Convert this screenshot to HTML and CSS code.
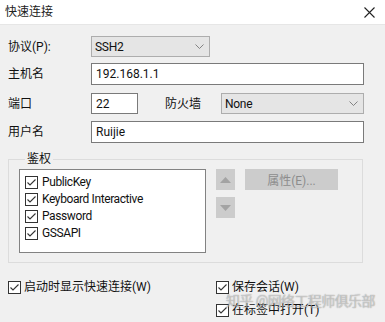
FILE: index.html
```html
<!DOCTYPE html>
<html>
<head>
<meta charset="utf-8">
<link rel="stylesheet" href="styles.css">
</head>
<body>
<div class="win">
  <div class="titlebar">
    <span class="title">快速连接</span>
    <svg class="close" width="11" height="11" viewBox="0 0 11 11"><path d="M0.5 0.5 L10.5 10.5 M10.5 0.5 L0.5 10.5" stroke="#222" stroke-width="1.1" fill="none"/></svg>
  </div>
  <div class="body">
    <div class="row r1">
      <span class="lbl">协议(P):</span>
      <div class="select sel-proto"><span>SSH2</span><svg class="chev" width="9" height="5" viewBox="0 0 9 5"><path d="M0.5 0.5 L4.5 4.5 L8.5 0.5" stroke="#777" stroke-width="0.9" fill="none"/></svg></div>
    </div>
    <div class="row r2">
      <span class="lbl">主机名</span>
      <div class="input wide">192.168.1.1</div>
    </div>
    <div class="row r3">
      <span class="lbl">端口</span>
      <div class="input port">22</div>
      <span class="lbl2">防火墙</span>
      <div class="select sel-fw"><span>None</span><svg class="chev" width="9" height="5" viewBox="0 0 9 5"><path d="M0.5 0.5 L4.5 4.5 L8.5 0.5" stroke="#777" stroke-width="0.9" fill="none"/></svg></div>
    </div>
    <div class="row r4">
      <span class="lbl">用户名</span>
      <div class="input wide">Ruijie</div>
    </div>
    <fieldset class="group">
      <legend>鉴权</legend>
      <div class="grp-inner">
        <div class="list">
          <div class="item"><span class="cb"><svg width="13" height="13" viewBox="0 0 13 13"><rect x="0.5" y="0.5" width="12" height="12" fill="#fff" stroke="#333"/><path d="M2.5 6.5 L5 9 L10.5 3.5" stroke="#333" stroke-width="1.1" fill="none"/></svg></span>PublicKey</div>
          <div class="item"><span class="cb"><svg width="13" height="13" viewBox="0 0 13 13"><rect x="0.5" y="0.5" width="12" height="12" fill="#fff" stroke="#333"/><path d="M2.5 6.5 L5 9 L10.5 3.5" stroke="#333" stroke-width="1.1" fill="none"/></svg></span>Keyboard Interactive</div>
          <div class="item"><span class="cb"><svg width="13" height="13" viewBox="0 0 13 13"><rect x="0.5" y="0.5" width="12" height="12" fill="#fff" stroke="#333"/><path d="M2.5 6.5 L5 9 L10.5 3.5" stroke="#333" stroke-width="1.1" fill="none"/></svg></span>Password</div>
          <div class="item"><span class="cb"><svg width="13" height="13" viewBox="0 0 13 13"><rect x="0.5" y="0.5" width="12" height="12" fill="#fff" stroke="#333"/><path d="M2.5 6.5 L5 9 L10.5 3.5" stroke="#333" stroke-width="1.1" fill="none"/></svg></span>GSSAPI</div>
        </div>
        <div class="arrows">
          <div class="abtn"><svg width="11" height="6" viewBox="0 0 11 6"><path d="M0 6 L5.5 0 L11 6 Z" fill="#a3a3a3"/></svg></div>
          <div class="abtn"><svg width="11" height="6" viewBox="0 0 11 6"><path d="M0 0 L5.5 6 L11 0 Z" fill="#a3a3a3"/></svg></div>
        </div>
        <div class="pbtn">属性(E)...</div>
      </div>
    </fieldset>
    <div class="opts">
      <div class="col">
        <div class="opt"><span class="cb"><svg width="13" height="13" viewBox="0 0 13 13"><rect x="0.5" y="0.5" width="12" height="12" fill="#fff" stroke="#333"/><path d="M2.5 6.5 L5 9 L10.5 3.5" stroke="#333" stroke-width="1.1" fill="none"/></svg></span>启动时显示快速连接(W)</div>
      </div>
      <div class="col right">
        <div class="opt"><span class="cb"><svg width="13" height="13" viewBox="0 0 13 13"><rect x="0.5" y="0.5" width="12" height="12" fill="#fff" stroke="#333"/><path d="M2.5 6.5 L5 9 L10.5 3.5" stroke="#333" stroke-width="1.1" fill="none"/></svg></span>保存会话(W)</div>
        <div class="opt"><span class="cb"><svg width="13" height="13" viewBox="0 0 13 13"><rect x="0.5" y="0.5" width="12" height="12" fill="#fff" stroke="#333"/><path d="M2.5 6.5 L5 9 L10.5 3.5" stroke="#333" stroke-width="1.1" fill="none"/></svg></span>在标签中打开(T)</div>
      </div>
    </div>
    <div class="watermark">知乎 @网络工程师俱乐部</div>
  </div>
</div>
</body>
</html>
```
FILE: styles.css
```css
* { box-sizing: border-box; }
html, body { margin: 0; padding: 0; }
body {
  width: 385px;
  height: 322px;
  overflow: hidden;
  background: #f0f0f0;
  font-family: Roboto, "Noto Sans CJK SC", sans-serif;
  font-size: 12px;
  color: #111;
}
.win { width: 385px; height: 322px; }
.titlebar {
  height: 25px;
  background: #fff;
  border-bottom: 1px solid #e6e6e6;
  display: flex;
  align-items: center;
  justify-content: space-between;
  padding: 0 10px 0 5px;
}
.title { font-size: 12px; color: #222; line-height: 16px; }
.close { display: block; }
.body { position: relative; padding-top: 11px; }
.row { display: flex; align-items: center; padding-left: 8px; }
.lbl { width: 83px; line-height: 16px; }
.lbl2 { width: 56px; margin-left: 27px; line-height: 16px; }
.r1 { height: 21px; }
.r2 { height: 22px; margin-top: 6px; }
.r3 { height: 21px; margin-top: 8px; }
.r4 { height: 22px; margin-top: 7px; }
.select {
  height: 21px;
  background: #e5e5e5;
  border: 1px solid #adadad;
  display: flex;
  align-items: center;
  justify-content: space-between;
  padding: 0 5px 0 3px;
  letter-spacing: -0.3px;
}
.sel-proto { width: 119px; }
.sel-fw { width: 143px; }
.input {
  height: 100%;
  background: #fff;
  border: 1px solid #7a7a7a;
  display: flex;
  align-items: center;
  padding-left: 4px;
}
.wide { width: 273px; }
.port { width: 47px; }
.group {
  margin: 8px 0 0 8px;
  width: 355px;
  height: 112px;
  border: 1px solid #dcdcdc;
  padding: 2px 10px 0 10px;
}
.group legend {
  padding: 0 2px;
  margin-left: 6px;
  line-height: 16px;
  font-size: 12px;
}
.grp-inner { display: flex; align-items: flex-start; }
.list {
  width: 187px;
  height: 84px;
  background: #fff;
  border: 1px solid #828282;
  padding: 4px 0 0 5px;
}
.item { display: flex; align-items: center; height: 17px; line-height: 17px; letter-spacing: -0.4px; }
.cb { display: flex; width: 13px; height: 13px; margin-right: 4px; }
.cb svg { display: block; }
.arrows { display: flex; flex-direction: column; gap: 7px; margin-left: 10px; }
.abtn {
  width: 19px;
  height: 21px;
  background: #cccccc;
  display: flex;
  align-items: center;
  justify-content: center;
}
.pbtn {
  margin-left: 10px;
  width: 93px;
  height: 21px;
  background: #cccccc;
  color: #8c8c8c;
  display: flex;
  align-items: center;
  justify-content: center;
}
.opts { display: flex; padding-left: 8px; margin-top: 17px; }
.col { width: 208px; display: flex; flex-direction: column; gap: 8px; }
.col.right { width: auto; }
.opt { display: flex; align-items: center; height: 15px; line-height: 15px; }
.opt .cb { margin-right: 3px; }
.watermark {
  position: absolute;
  left: 226px;
  top: 265px;
  font-size: 14px;
  color: rgba(255,255,255,0.5);
  text-shadow: 0 0 1px rgba(0,0,0,0.5);
  white-space: nowrap;
  letter-spacing: -0.6px;
}
```
